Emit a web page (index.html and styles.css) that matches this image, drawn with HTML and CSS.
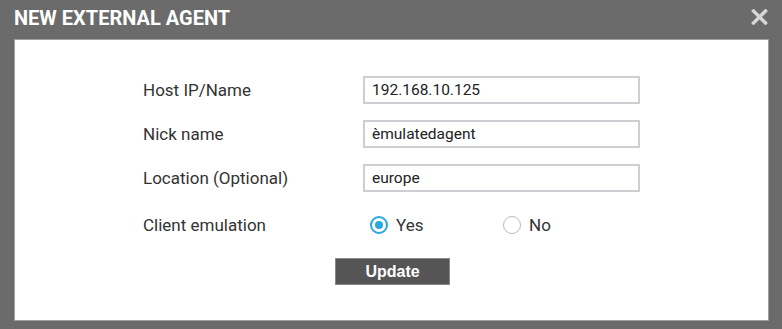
FILE: index.html
```html
<!DOCTYPE html>
<html lang="en">
<head>
    <meta charset="UTF-8">
    <title>New External Agent</title>
    <link rel="stylesheet" href="styles.css">
</head>
<body>

<div class="dialog">
    <div class="dialog-header">
        <h1>NEW EXTERNAL AGENT</h1>
        <svg class="close" width="17" height="16" viewBox="0 0 17 16">
            <path d="M2.5 2 L14.5 14 M14.5 2 L2.5 14" stroke="#d6d6d6" stroke-width="3.4" stroke-linecap="square"/>
        </svg>
    </div>

    <div class="dialog-body">
        <form class="agent-form">
            <label>Host IP/Name</label>
            <input type="text" value="192.168.10.125">

            <label>Nick name</label>
            <input type="text" value="èmulatedagent">

            <label>Location (Optional)</label>
            <input type="text" value="europe">

            <label class="radio-label">Client emulation</label>
            <div class="radios">
                <span class="radio"><span class="dot checked"></span>Yes</span>
                <span class="radio"><span class="dot"></span>No</span>
            </div>
        </form>
        <div class="actions">
            <button class="button">Update</button>
        </div>
    </div>
</div>

</body>
</html>
```

FILE: styles.css
```css
body {
    margin: 0;
    background: #6b6b6b;
    font-family: 'Roboto', sans-serif;
    color: #333;
    height: 329px;
    overflow: hidden;
}

.dialog-header {
    display: flex;
    align-items: center;
    justify-content: space-between;
    height: 36px;
    padding: 0 14px 0 14px;
}

.dialog-header h1 {
    margin: 0;
    font-size: 20px;
    font-weight: 700;
    color: #fff;
}

.close {
    display: block;
    margin-top: -3px;
}

.dialog-body {
    background: #fff;
    margin: 3px 13px 0 14px;
    height: 282px;
    border: 1px solid #a0a0a0;
    box-sizing: border-box;
    padding-top: 36px;
}

.agent-form {
    display: grid;
    grid-template-columns: 220px 277px;
    row-gap: 16px;
    margin-left: 128px;
    align-items: center;
}

.agent-form label {
    font-size: 17px;
    color: #333;
}

.agent-form input {
    height: 28px;
    box-sizing: border-box;
    border: 2px solid #ccd0d4;
    padding: 0 7px;
    font-family: 'Roboto', sans-serif;
    font-size: 15.5px;
    color: #222;
    outline: none;
}

.radio-label {
    margin-top: 3px;
}

.radios {
    display: flex;
    margin-top: 3px;
    height: 28px;
    align-items: center;
}

.radio {
    display: flex;
    align-items: center;
    width: 133px;
    box-sizing: border-box;
    font-size: 17px;
    color: #333;
    padding-left: 7px;
}

.dot {
    width: 18px;
    height: 18px;
    box-sizing: border-box;
    border: 1px solid #bbb;
    border-radius: 50%;
    margin-right: 8px;
    position: relative;
}

.dot.checked {
    border: 2px solid #29a8e0;
}

.dot.checked::after {
    content: "";
    position: absolute;
    left: 3px;
    top: 3px;
    width: 8px;
    height: 8px;
    border-radius: 50%;
    background: #29a8e0;
}

.actions {
    display: flex;
    margin-left: 320px;
    margin-top: 19px;
}

.button {
    background-color: #555;
    color: #fff;
    border: 1px solid #888;
    width: 115px;
    height: 27px;
    font-family: 'Liberation Sans', Arial, sans-serif;
    font-weight: 700;
    font-size: 16px;
    cursor: pointer;
}
```
